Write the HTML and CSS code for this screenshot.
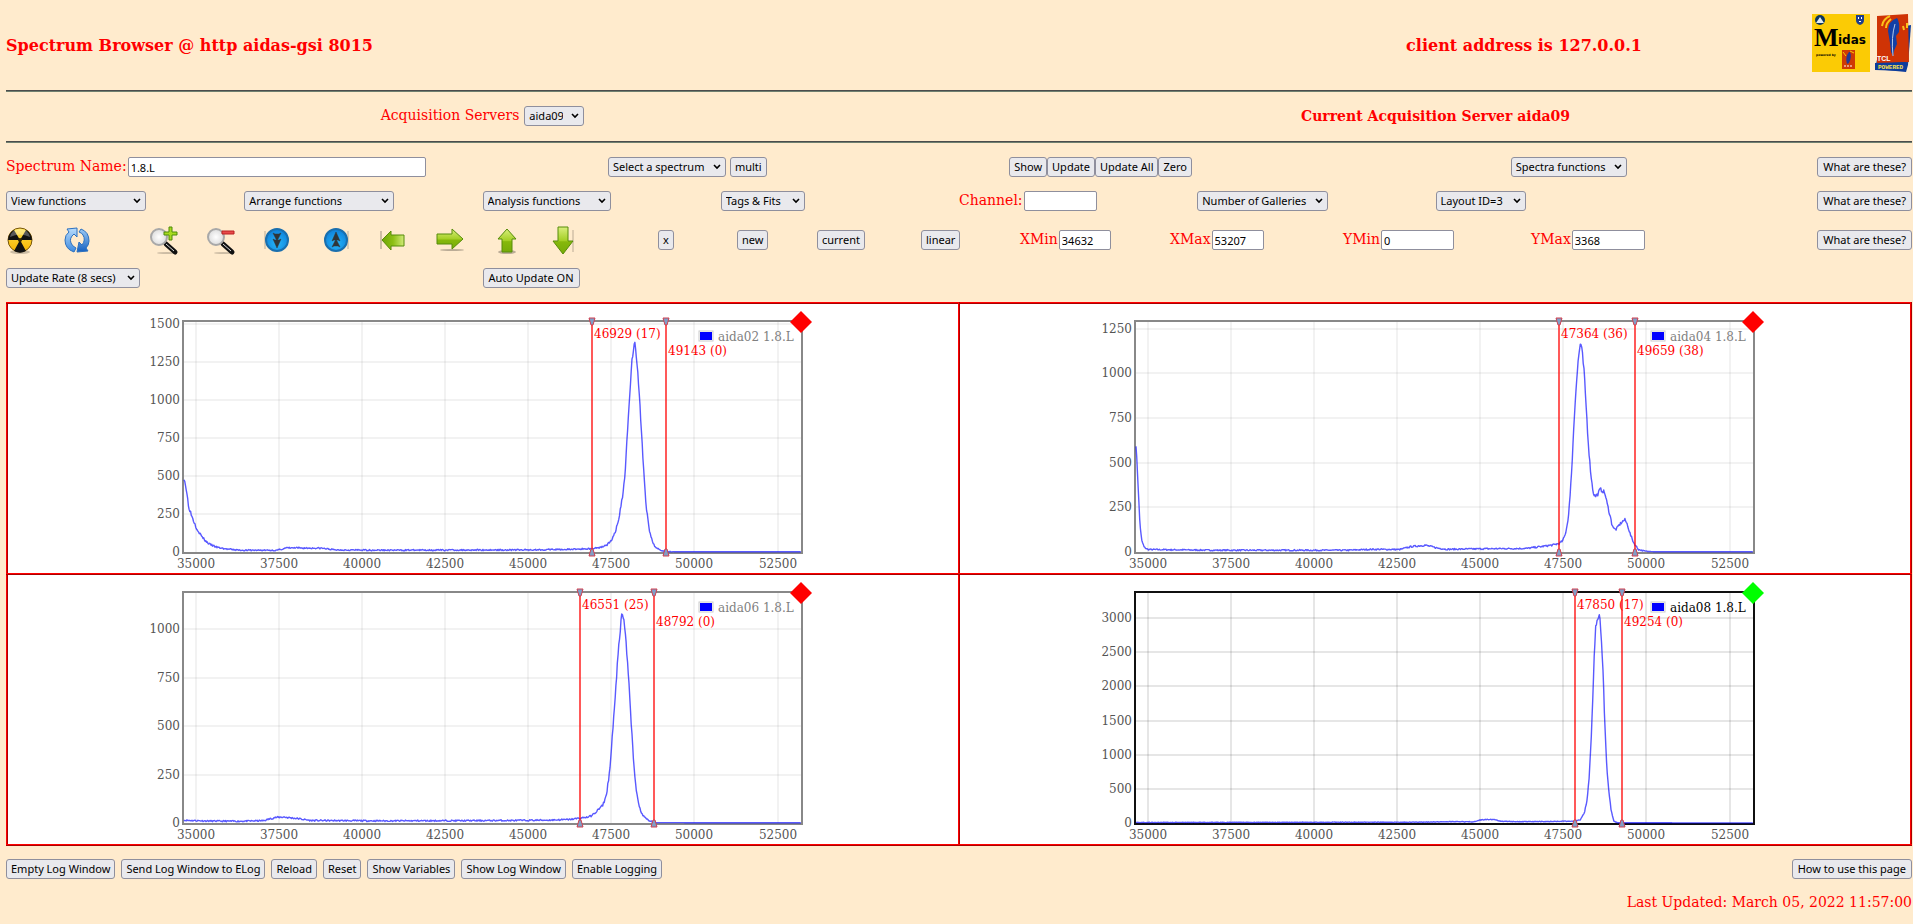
FILE: index.html
```html
<!DOCTYPE html>
<html lang="en">
<head>
<meta charset="utf-8">
<title>Spectrum Browser @ http aidas-gsi 8015</title>
<link rel="stylesheet" href="styles.css">
</head>
<body>
<svg class="defs" aria-hidden="true">
  <defs>
    <linearGradient id="green" x1="0" y1="0" x2="0" y2="1"><stop offset="0" stop-color="#d9ee7c"/><stop offset=".5" stop-color="#a4cf25"/><stop offset=".55" stop-color="#86b80c"/><stop offset="1" stop-color="#76ab08"/></linearGradient>
    <linearGradient id="green-side" x1="0" y1="0" x2="1" y2="0"><stop offset="0" stop-color="#6ea404"/><stop offset=".5" stop-color="#8cbf14"/><stop offset="1" stop-color="#d2ea78"/></linearGradient>
    <radialGradient id="blue" cx=".5" cy=".65" r=".6"><stop offset="0" stop-color="#27b6f8"/><stop offset="1" stop-color="#0f83dc"/></radialGradient>
    <linearGradient id="sky" x1="0" y1="0" x2="0" y2="1"><stop offset="0" stop-color="#b9dcfb"/><stop offset="1" stop-color="#3d8ae0"/></linearGradient>
    <linearGradient id="sky-deep" x1="0" y1="0" x2="0" y2="1"><stop offset="0" stop-color="#9ccbf6"/><stop offset="1" stop-color="#1560c0"/></linearGradient>
    <linearGradient id="yellow" x1="0" y1="0" x2="0" y2="1"><stop offset="0" stop-color="#ffe14a"/><stop offset="1" stop-color="#f5b300"/></linearGradient>
    <radialGradient id="lens"><stop offset="0" stop-color="#fff"/><stop offset="1" stop-color="#dcdcdc"/></radialGradient>
  </defs>
</svg>

<header class="masthead">
  <h1>Spectrum Browser @ http aidas-gsi 8015</h1>
  <h2>client address is 127.0.0.1</h2>
  <div class="logos">
    <svg width="58" height="58" viewBox="0 0 58 58" role="img" aria-label="Midas">
      <rect width="58" height="58" fill="#fbcb05"/>
      <circle cx="8" cy="6" r="5" fill="#0b3560"/><path d="M4 9l4-6 4 6z" fill="#dfe9f0"/>
      <path d="M44 1h8v5q0 4-4 5q-4-1-4-5z" fill="#1c3d8f"/><path d="M46 3h1v2h-1zM49 3h1v2h-1zM47 7h2v1h-2z" fill="#fff"/>
      <text x="2" y="32" class="midas-m">M</text><text x="26" y="30" class="midas-rest">idas</text>
      <text x="4" y="42" class="midas-small">powered by</text>
      <path d="M30 36h13v19H30z" fill="#cf3a05"/><path d="M37 38q-4 5-2 12l2-1q3-6 1-11z" fill="#203a98"/><path d="M31 38l3 4M38 37l4 2" stroke="#fbcb05"/><path d="M32 52h9" stroke="#fff" stroke-dasharray="2 1"/>
    </svg>
    <svg width="38" height="58" viewBox="0 0 38 58" role="img" aria-label="Tcl powered">
      <path d="M32 12l5-1-3 40-2 7-31-3 3-14z" fill="#0d3c9c"/>
      <path d="M3 2l31-2 1 48-32 2z" fill="#cf3305"/>
      <path d="M8 12q1-7 8-10M12 14q0-5 5-9M29 12l1 4M33 9v5" stroke="#fbc31a" stroke-width="2" fill="none"/>
      <path d="M23 4q-9 3-9 13l2 12 1 9 2 4q1-7 4-12l-1-8 3-4q1-10-2-14z" fill="#133fa6"/>
      <path d="M21 10q-4 13-2 32" stroke="#b6cbe8" fill="none"/>
      <text x="3" y="47" class="tcl-name">TCL</text>
      <path d="M1 49l31-1-1 9-30-1z" fill="#0d3c9c"/><text x="4" y="55" class="tcl-powered">POWERED</text>
    </svg>
  </div>
</header>
<hr>
<section class="servers">
  <p><label for="server">Acquisition Servers</label> <select class="w60" id="server"><option>aida09</option></select></p>
  <h3>Current Acquisition Server aida09</h3>
</section>
<hr>

<main>
  <form class="controls">
    <div class="row row-spectrum">
      <div class="cell"><label for="name">Spectrum Name:</label><input class="wide" id="name" type="text" value="1.8.L"></div>
      <div class="cell spaced"><select aria-label="Spectrum"><option>Select a spectrum</option></select><button type="button">multi</button></div>
      <div class="cell"><button type="button">Show</button><button type="button">Update</button><button type="button">Update All</button><button type="button">Zero</button></div>
      <div class="cell split"><select aria-label="Spectra functions"><option>Spectra functions</option></select><button type="button" class="help">What are these?</button></div>
    </div>
    <div class="row row-functions">
      <div class="cell"><select class="w140" aria-label="View functions"><option>View functions</option></select></div>
      <div class="cell"><select class="w150" aria-label="Arrange functions"><option>Arrange functions</option></select></div>
      <div class="cell"><select class="w128" aria-label="Analysis functions"><option>Analysis functions</option></select></div>
      <div class="cell"><select class="w84" aria-label="Tags and fits"><option>Tags &amp; Fits</option></select></div>
      <div class="cell"><label for="channel">Channel:</label><input id="channel" type="text"></div>
      <div class="cell"><select aria-label="Number of galleries"><option>Number of Galleries</option></select></div>
      <div class="cell"><select class="w90" aria-label="Layout"><option>Layout ID=3</option></select></div>
      <div class="cell end"><button type="button" class="help">What are these?</button></div>
    </div>
    <div class="row row-tools">
      <button type="button" class="icon" aria-label="Clear"><svg viewBox="0 0 32 32"><ellipse cx="16" cy="28" rx="10" ry="2" fill="#0003"/><circle cx="16" cy="16" r="12" fill="url(#yellow)" stroke="#77560a"/><path d="M16 16L4 16A12 12 0 0 1 10 6zM16 16L22 6A12 12 0 0 1 28 16zM16 16L22 27A12 12 0 0 1 10 27z" fill="#111"/><circle cx="16" cy="16" r="2" fill="#332800"/><path d="M6 13Q8 5 16 5t10 8q-10-5-20 0z" fill="#fff" opacity=".3"/></svg></button>
      <button type="button" class="icon" aria-label="Refresh"><svg viewBox="0 0 32 32"><path d="M13 28Q4 25 4 16q0-5 4-8L6 5l10-1v9l-3-3q-5 4-3 9 1 3 5 5z" fill="url(#sky)" stroke="#2c70bf"/><path d="M20 5q8 3 8 12 0 4-3 7l2 3-11 1 2-10 3 3q4-5 1-10-1-2-4-3z" fill="url(#sky-deep)" stroke="#2c70bf"/></svg></button>
      <button type="button" class="icon" aria-label="Zoom in"><svg viewBox="0 0 32 32"><ellipse cx="20" cy="29" rx="10" ry="1" fill="#0003"/><path d="M19 20l9 8" stroke="#111" stroke-width="5" stroke-linecap="round"/><path d="M19 20l8 7" stroke="#ddd"/><circle cx="12" cy="13" r="8" fill="url(#lens)" stroke="#a8a8a8" stroke-width="2"/><path d="M22 3h3v5h5v3h-5v5h-3v-5h-5V8h5z" fill="#a8da1e" stroke="#4c8b08"/></svg></button>
      <button type="button" class="icon" aria-label="Zoom out"><svg viewBox="0 0 32 32"><ellipse cx="20" cy="29" rx="10" ry="1" fill="#0003"/><path d="M19 20l9 8" stroke="#111" stroke-width="5" stroke-linecap="round"/><path d="M19 20l8 7" stroke="#ddd"/><circle cx="12" cy="13" r="8" fill="url(#lens)" stroke="#a8a8a8" stroke-width="2"/><path d="M18 7h12v3H18z" fill="#e84a4a" stroke="#b82020"/></svg></button>
      <button type="button" class="icon" aria-label="Scale down"><svg viewBox="0 0 32 32"><path d="M4 7v18" stroke="#0004"/><circle cx="16" cy="16" r="11" fill="url(#blue)" stroke="#1a6fae" stroke-width="2"/><path d="M12 9l2 1h4l2-1-4 8zM12 15l2 1h4l2-1-4 9z" fill="#303538" stroke="#303538" stroke-width=".5"/></svg></button>
      <button type="button" class="icon" aria-label="Scale up"><svg viewBox="0 0 32 32"><path d="M28 7v18" stroke="#0004"/><circle cx="16" cy="16" r="11" fill="url(#blue)" stroke="#1a6fae" stroke-width="2"/><path d="M12 23l2-1h4l2 1-4-8zM12 17l2-1h4l2 1-4-9z" fill="#303538" stroke="#303538" stroke-width=".5"/></svg></button>
      <button type="button" class="icon" aria-label="Move left"><svg viewBox="0 0 32 32"><path d="M4 7v18" stroke="#0003" stroke-width="2"/><path d="M5 16l9-9v4h13v11H14v4z" fill="url(#green-side)" stroke="#568c0a"/></svg></button>
      <button type="button" class="icon" aria-label="Move right"><svg viewBox="0 0 32 32"><ellipse cx="18" cy="26" rx="12" ry="1" fill="#0004"/><path d="M29 15L18 5v5H3v10h15v5z" fill="url(#green)" stroke="#568c0a"/></svg></button>
      <button type="button" class="icon" aria-label="Move up"><svg viewBox="0 0 32 32"><ellipse cx="16" cy="28" rx="9" ry="2" fill="#0004"/><path d="M16 5l9 10h-4v13H11V15H7z" fill="url(#green)" stroke="#568c0a"/></svg></button>
      <button type="button" class="icon" aria-label="Move down"><svg viewBox="0 0 32 32"><path d="M25 6v22" stroke="#0002" stroke-width="2"/><path d="M15 30L5 17h5V3h10v14h5z" fill="url(#green)" stroke="#568c0a"/></svg></button>
      <div class="cell"><button type="button">x</button></div>
      <div class="cell"><button type="button">new</button></div>
      <div class="cell"><button type="button">current</button></div>
      <div class="cell"><button type="button">linear</button></div>
      <div class="cell"><label for="xmin">XMin</label><input class="narrow" id="xmin" type="text" value="34632"></div>
      <div class="cell"><label for="xmax">XMax</label><input class="narrow" id="xmax" type="text" value="53207"></div>
      <div class="cell"><label for="ymin">YMin</label><input id="ymin" type="text" value="0"></div>
      <div class="cell split"><span class="cell"><label for="ymax">YMax</label><input id="ymax" type="text" value="3368"></span><button type="button" class="help">What are these?</button></div>
    </div>
    <div class="row row-update">
      <div class="cell"><select class="w134" aria-label="Update rate"><option>Update Rate (8 secs)</option></select></div>
      <div class="cell"><button type="button" class="help">Auto Update ON</button></div>
    </div>
  </form>

  <table class="gallery">
    <tr><td id="plot-aida02"></td><td id="plot-aida04"></td></tr>
    <tr><td id="plot-aida06"></td><td id="plot-aida08"></td></tr>
  </table>
</main>

<footer>
  <div class="actions">
    <button type="button">Empty Log Window</button><button type="button">Send Log Window to ELog</button><button type="button">Reload</button><button type="button">Reset</button><button type="button">Show Variables</button><button type="button">Show Log Window</button><button type="button">Enable Logging</button>
    <button type="button" class="help last">How to use this page</button>
  </div>
  <p class="updated">Last Updated: March 05, 2022 11:57:00</p>
</footer>
<script src="charts.js"></script>
</body>
</html>
```

FILE: styles.css
```css
* {
  box-sizing: border-box;
}

body {
  margin: 0;
  padding: 0 1px 0 6px;
  background: #ffebcd;
  color: #ff0000;
  font: 14px/20px "DejaVu Serif", serif;
}

h1, h2, h3, p {
  margin: 0;
}

h1, h2 {
  padding-top: 6px;
  font-size: 16px;
}

h3 {
  font-size: 14px;
}

hr {
  height: 2px;
  margin: 0;
  border: 0;
  border-top: 1px solid #4c4c4c;
  background: #708070;
}

.defs {
  position: absolute;
  width: 0;
  height: 0;
}

.masthead {
  display: grid;
  grid-template-columns: 1230fr 576fr 100fr;
  align-items: center;
  padding: 14px 0 18px;
}

.masthead h2 {
  text-align: center;
}

.logos {
  display: flex;
  justify-content: flex-end;
  gap: 4px;
}

.midas-m {
  font: bold 26px "Liberation Serif", serif;
}

.midas-rest {
  font: bold 12px "DejaVu Sans", sans-serif;
}

.midas-small {
  font: bold 3px "DejaVu Sans", sans-serif;
}

.tcl-name {
  font: bold 7px "Liberation Sans", sans-serif;
  fill: #ffffff;
}

.tcl-powered {
  font: bold 6px "Liberation Mono", monospace;
  fill: #ffe14a;
}

.servers {
  display: grid;
  grid-template-columns: 1fr 1fr;
  align-items: center;
  padding: 14px 0 15px;
  text-align: center;
}

.servers p {
  display: flex;
  justify-content: center;
  gap: 4px;
}

label {
  margin-right: 1px;
  line-height: 18px;
}

button, select, input {
  height: 20px;
  margin: 0;
  border: 1px solid #8f8f9d;
  border-radius: 3px;
  color: #000000;
  font: 11px/18px "Noto Sans", sans-serif;
}

button {
  padding: 0 4px;
  background: #e9e9ed;
  white-space: nowrap;
}

select {
  appearance: none;
  padding: 0 20px 0 4px;
  background: #e9e9ed url("data:image/svg+xml,%3Csvg xmlns='http://www.w3.org/2000/svg' width='8' height='6'%3E%3Cpath d='M1 1l3 3 3-3' fill='none' stroke='%23000' stroke-width='1.6'/%3E%3C/svg%3E") no-repeat right 4px center;
}

input {
  width: 73px;
  padding: 0 2px;
  border-radius: 2px;
  background: #ffffff;
}

input.narrow {
  width: 52px;
}

input.wide {
  width: 298px;
}

.w60 {
  width: 60px;
}

.w84 {
  width: 84px;
}

.w90 {
  width: 90px;
}

.w134 {
  width: 134px;
}

.w140 {
  width: 140px;
}

.w150 {
  width: 150px;
}

.w128 {
  width: 128px;
}

.controls {
  padding: 14px 0;
}

.row {
  display: grid;
  align-items: center;
}

.row-spectrum {
  grid-template-columns: 6fr 4fr 5fr 4fr;
}

.row-functions {
  grid-template-columns: repeat(8, minmax(0, 1fr));
  padding: 14px 0 13px;
}

.row-tools {
  grid-template-columns: 57fr 86fr 57fr 57fr 59fr 57fr 57fr 57fr 57fr 108fr 79fr 80fr 104fr 99fr 150fr 173fr 188fr 381fr;
}

.row-update {
  grid-template-columns: 1fr 3fr;
  padding-top: 12px;
}

.cell {
  display: flex;
}

.spaced {
  gap: 4px;
}

.split {
  justify-content: space-between;
}

.end {
  justify-content: flex-end;
}

.help {
  padding: 0 5px;
}

.icon {
  width: 28px;
  height: 32px;
  padding: 0;
  border: 0;
  background: none;
}

.icon svg {
  display: block;
  width: 32px;
  height: 32px;
  margin-left: -2px;
}

.gallery {
  width: 100%;
  border-collapse: collapse;
  table-layout: fixed;
}

.gallery td {
  padding: 0;
  border: 2px ridge #ff0000;
  background: #ffffff;
}

.plot {
  display: block;
  width: 680px;
  height: 269px;
  margin: 0 auto;
  overflow: visible;
  font: 12px "DejaVu Serif", serif;
}

.plot text {
  fill: #545454;
}

.plot .marker-label {
  fill: #ff0000;
}

.plot.inactive .legend {
  fill: #808080;
}

.plot.active .legend {
  fill: #000000;
}

.actions {
  display: flex;
  gap: 6px;
  padding-top: 13px;
}

.last {
  margin-left: auto;
}

.updated {
  padding: 13px 0 7px;
  text-align: right;
}
```

FILE: charts.js
```javascript
(function () {
  "use strict";

  var X_MIN = 34632, X_MAX = 53207;
  var LEFT = 41, RIGHT = 658, TOP = 18, BOTTOM = 248;

  var plots = [
    { name: "aida02", yMax: 1515, yStep: 250, noise: 5, seed: 3,
      markers: [[46929, 17], [49143, 0]],
      data: [[34632,490],[34664,460],[34718,385],[34772,300],[34879,230],[35013,156],[35148,108],[35282,72],[35416,50],[35618,31],[35886,20],[36289,12],[37431,11],[37726,27],[38774,25],[39177,14],[40788,12],[44817,14],[46160,17],[46899,22],[47168,31],[47369,48],[47503,75],[47611,130],[47718,211],[47826,354],[47906,508],[47987,800],[48054,1060],[48121,1270],[48175,1360],[48202,1378],[48229,1345],[48282,1200],[48336,1060],[48403,800],[48470,530],[48551,290],[48645,135],[48739,62],[48846,26],[49048,8],[49400,2],[53207,1]] },
    { name: "aida04", yMax: 1287, yStep: 250, noise: 4, seed: 7,
      markers: [[47364, 36], [49659, 38]],
      data: [[34632,605],[34700,356],[34745,170],[34800,67],[34880,26],[34990,14],[37000,10],[41000,10],[41700,15],[42575,14],[42910,30],[43340,38],[43716,22],[43990,15],[45060,18],[46400,20],[46940,33],[47210,40],[47370,48],[47476,62],[47557,99],[47638,180],[47705,320],[47772,543],[47825,750],[47880,925],[47947,1075],[48014,1175],[48068,1110],[48121,1010],[48175,840],[48229,673],[48282,525],[48350,394],[48403,330],[48457,312],[48524,320],[48605,350],[48685,343],[48750,328],[48820,267],[48900,207],[48954,160],[49021,129],[49090,127],[49196,155],[49290,173],[49357,180],[49437,148],[49518,95],[49625,48],[49760,14],[49960,4],[50300,1],[53207,1]] },
    { name: "aida06", yMax: 1187, yStep: 250, noise: 4, seed: 11,
      markers: [[46551, 25], [48792, 0]],
      data: [[34632,14],[35500,10],[36300,9],[37028,12],[37360,28],[37630,31],[38100,22],[38440,13],[40788,11],[44550,13],[45620,15],[46230,18],[46563,25],[46832,32],[46939,42],[47100,68],[47235,90],[47342,140],[47423,232],[47476,327],[47530,456],[47600,610],[47665,783],[47718,935],[47745,930],[47785,1033],[47825,1080],[47880,1040],[47933,947],[48000,800],[48067,593],[48134,405],[48215,215],[48309,103],[48390,57],[48510,27],[48645,10],[48846,2],[53207,1]] },
    { name: "aida08", yMax: 3368, yStep: 500, noise: 4, seed: 5, active: true,
      markers: [[47850, 17], [49254, 0]],
      data: [[34632,8],[43200,12],[44090,20],[44810,18],[44970,43],[45210,52],[45450,48],[45610,27],[46090,19],[46890,22],[47850,27],[48010,50],[48136,155],[48216,358],[48280,700],[48330,1185],[48376,1720],[48424,2400],[48470,2880],[48504,2940],[48565,3055],[48600,2985],[48648,2645],[48696,2160],[48744,1480],[48792,940],[48856,504],[48936,187],[49016,27],[49130,3],[53207,1]] }
  ];

  function xPos(channel) {
    return LEFT + (channel - X_MIN) / (X_MAX - X_MIN) * (RIGHT - LEFT);
  }

  function curve(plot, yPos) {
    var seed = plot.seed, points = [], i = 0;
    for (var c = X_MIN; c <= X_MAX; c += 22) {
      while (i < plot.data.length - 2 && plot.data[i + 1][0] < c) i++;
      var a = plot.data[i], b = plot.data[i + 1];
      var v = a[1] + (b[1] - a[1]) * (c - a[0]) / (b[0] - a[0]);
      seed = (seed * 16807) % 2147483647;
      var r = seed / 2147483647 - 0.5;
      if (v > 3) v += r * (plot.noise + Math.sqrt(v));
      points.push(xPos(c).toFixed(1) + "," + yPos(v).toFixed(1));
    }
    return points.join(" ");
  }

  function render(plot) {
    function yPos(v) { return BOTTOM - v / plot.yMax * (BOTTOM - TOP); }
    var frame = plot.active ? "#101010" : "#888888";
    var grid = plot.active ? "rgba(84,84,84,0.15)" : "rgba(84,84,84,0.08)";
    var s = '<svg class="plot ' + (plot.active ? "active" : "inactive") + '" viewBox="0 0 680 269" role="img" aria-label="' + plot.name + ' 1.8.L">';
    var v, p;
    for (v = 35000; v <= 52500; v += 2500) {
      p = Math.round(xPos(v));
      s += '<path d="M' + p + ' ' + TOP + 'V' + BOTTOM + '" stroke="' + grid + '" stroke-width="2"/>';
      s += '<text x="' + p + '" y="264" text-anchor="middle">' + v + '</text>';
    }
    for (v = 0; v <= plot.yMax; v += plot.yStep) {
      p = Math.round(yPos(v));
      if (v) s += '<path d="M' + LEFT + ' ' + p + 'H' + RIGHT + '" stroke="' + grid + '" stroke-width="2"/>';
      s += '<text x="37" y="' + (p + 4) + '" text-anchor="end">' + v + '</text>';
    }
    s += '<rect x="40" y="17" width="619" height="232" fill="none" stroke="' + frame + '" stroke-width="2"/>';
    s += '<polyline points="' + curve(plot, yPos) + '" fill="none" stroke="#0000ff" stroke-opacity="0.65" stroke-width="1.4" stroke-linejoin="round"/>';
    plot.markers.forEach(function (m, i) {
      p = Math.round(xPos(m[0]));
      s += '<path d="M' + p + ' 17V249" stroke="#ff0000" stroke-opacity="0.65" stroke-width="2"/>';
      s += '<path d="M' + (p - 3) + ' 14h6l-2 7h-2zM' + (p - 3) + ' 252h6l-2-7h-2z" fill="#7f9fc8" stroke="#d04050"/>';
      s += '<text class="marker-label" x="' + (p + 2) + '" y="' + (i ? 51 : 34) + '">' + m[0] + ' (' + m[1] + ')</text>';
    });
    s += '<rect x="556" y="27" width="14" height="10" fill="#fff" stroke="#ccc"/><rect x="557" y="28" width="12" height="8" fill="#0000ff"/>';
    s += '<text class="legend" x="575" y="37">' + plot.name + ' 1.8.L</text>';
    s += '<path d="M658 7l11 11-11 11-11-11z" fill="' + (plot.active ? "#00ff00" : "#ff0000") + '"/></svg>';
    document.getElementById("plot-" + plot.name).innerHTML = s;
  }

  plots.forEach(render);
}());
```
